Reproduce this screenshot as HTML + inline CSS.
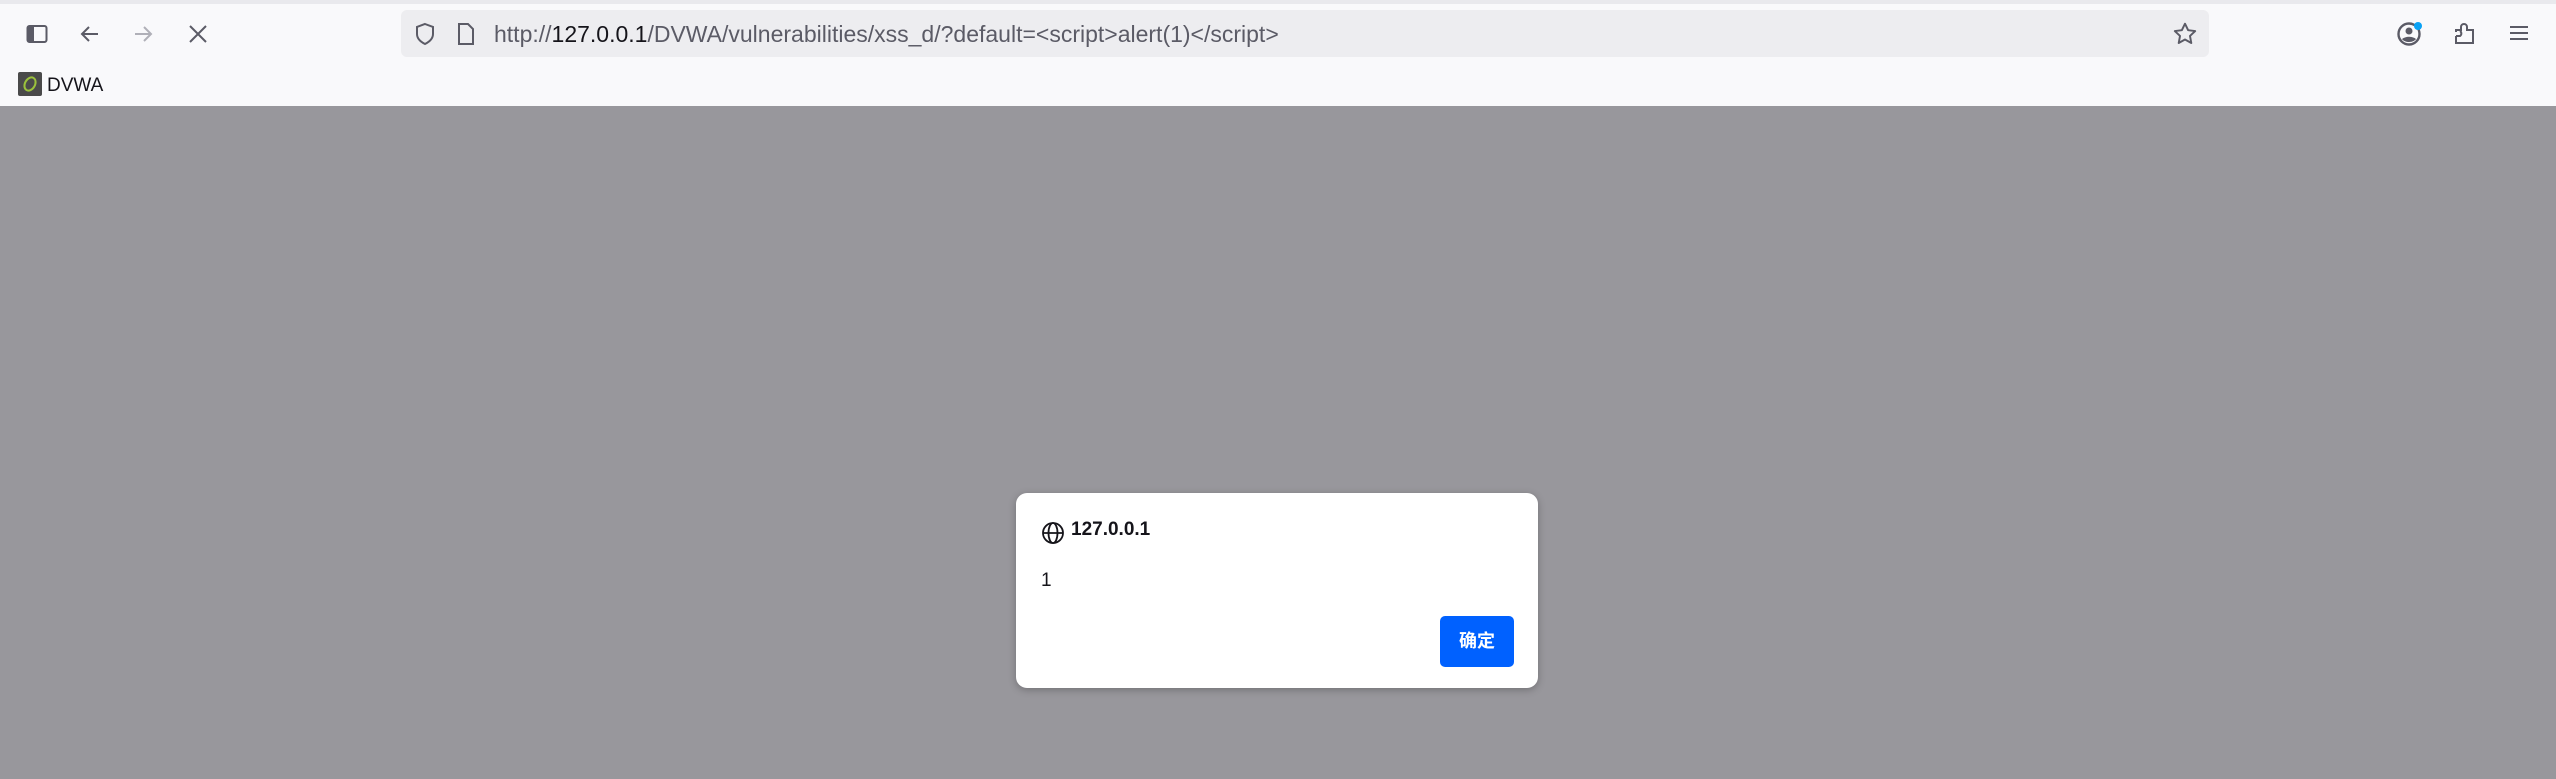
<!DOCTYPE html>
<html><head><meta charset="utf-8"><style>
*{margin:0;padding:0;box-sizing:border-box}
body{width:2556px;height:779px;overflow:hidden;background:#98979c;font-family:"Liberation Sans","Noto Sans CJK SC",sans-serif;position:relative}
.top{position:absolute;left:0;top:0;width:2556px;height:106px;background:#f9f9fb}
.strip{position:absolute;left:0;top:0;width:2556px;height:4px;background:#e9e9ed}
.tab{position:absolute;left:740px;top:0;width:1380px;height:3px;background:#dcdce0}
.url{position:absolute;left:401px;top:10px;width:1808px;height:47px;background:#ededf0;border-radius:6px}
.ut{position:absolute;left:494px;top:21px;font-size:23px;color:#5b5b66;white-space:nowrap}
.ut b{font-weight:normal;color:#15141a}
svg{position:absolute}
.bm{position:absolute;left:18px;top:72px;width:24px;height:24px;background:#4a4a4a;border-radius:2px}
.bmt{position:absolute;left:47px;top:75px;font-size:19px;color:#15141a}
.dlg{position:absolute;left:1016px;top:493px;width:522px;height:195px;background:#fff;border-radius:11px;box-shadow:0 2px 8px rgba(0,0,0,.25)}
.tt{position:absolute;left:55px;top:26px;font-size:19px;font-weight:bold;color:#15141a}
.one{position:absolute;left:25px;top:77px;font-size:19px;color:#15141a}
.btn{position:absolute;left:424px;top:123px;width:74px;height:51px;background:#0061ff;border-radius:5px;color:#fff;font-weight:bold;font-size:18px;text-align:center;line-height:51px}
</style></head><body>
<div class="top"></div><div class="strip"></div>
<svg style="left:26px;top:24px" width="22" height="20" viewBox="0 0 22 20"><rect x="1.5" y="2" width="19" height="16" rx="2" fill="none" stroke="#5b5b66" stroke-width="2"/><rect x="2" y="3" width="6" height="14" fill="#5b5b66"/></svg>
<svg style="left:78px;top:22px" width="24" height="24" viewBox="0 0 24 24" fill="none" stroke="#5b5b66" stroke-width="2"><path d="M20 12H4M11 5l-7 7 7 7"/></svg>
<svg style="left:131px;top:22px" width="24" height="24" viewBox="0 0 24 24" fill="none" stroke="#b0b0b8" stroke-width="2"><path d="M4 12h16M13 5l7 7-7 7"/></svg>
<svg style="left:187px;top:23px" width="22" height="22" viewBox="0 0 22 22" fill="none" stroke="#5b5b66" stroke-width="2"><path d="M3 3l16 16M19 3L3 19"/></svg>
<div class="url"></div>
<svg style="left:414px;top:22px" width="22" height="24" viewBox="0 0 22 24" fill="none" stroke="#5b5b66" stroke-width="2"><path d="M11 2l8 3v7c0 5-4 8-8 10-4-2-8-5-8-10V5z"/></svg>
<svg style="left:456px;top:22px" width="20" height="24" viewBox="0 0 20 24" fill="none" stroke="#5b5b66" stroke-width="2"><path d="M3 2h9l5 5v15H3z"/></svg>
<div class="ut">http://<b>127.0.0.1</b>/DVWA/vulnerabilities/xss_d/?default=&lt;script&gt;alert(1)&lt;/script&gt;</div>
<svg style="left:2172px;top:21px" width="26" height="26" viewBox="0 0 24 24" fill="none" stroke="#5b5b66" stroke-width="1.8" stroke-linejoin="round"><path d="M12 2.5l2.9 6 6.5.8-4.8 4.5 1.2 6.5L12 17.1l-5.8 3.2 1.2-6.5-4.8-4.5 6.5-.8z"/></svg>
<svg style="left:2396px;top:21px" width="28" height="28" viewBox="0 0 28 28"><circle cx="13" cy="13" r="10.5" fill="none" stroke="#5b5b66" stroke-width="2.4"/><circle cx="13" cy="10" r="3.5" fill="#5b5b66"/><path d="M6 18c4-3 10-3 14 0-3 4-11 4-14 0z" fill="#5b5b66"/><circle cx="22" cy="5" r="4" fill="#0aa2f5"/></svg>
<svg style="left:2454px;top:22px" width="22" height="24" viewBox="0 0 22 24" fill="none" stroke="#5b5b66" stroke-width="2"><path d="M2 14h4a3 3 0 0 0 0-5v0M2 14v7h17V8h-6V5a3 3 0 0 0-6 0v3H2v2"/></svg>
<svg style="left:2508px;top:24px" width="22" height="18" viewBox="0 0 22 18" stroke="#5b5b66" stroke-width="2"><path d="M2 3h18M2 9h18M2 15h18"/></svg>
<div class="bm"><svg style="left:3px;top:3px" width="18" height="18" viewBox="0 0 18 18"><ellipse cx="9" cy="9" rx="5" ry="7" fill="none" stroke="#9bc23c" stroke-width="2" transform="rotate(30 9 9)"/></svg></div>
<div class="bmt">DVWA</div>
<div class="dlg">
<svg style="left:25px;top:28px" width="24" height="24" viewBox="0 0 24 24" fill="none" stroke="#15141a" stroke-width="1.8"><circle cx="12" cy="12" r="10"/><ellipse cx="12" cy="12" rx="4.5" ry="10"/><path d="M2 12h20"/></svg>
<div class="tt">127.0.0.1</div>
<div class="one">1</div>
<div class="btn">确定</div>
</div>
</body></html>
